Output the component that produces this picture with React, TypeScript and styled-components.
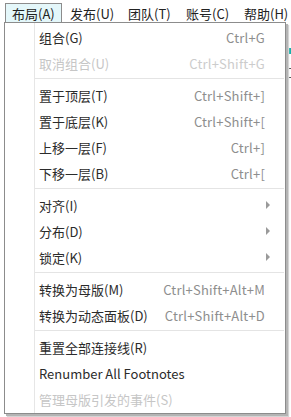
import styled, { createGlobalStyle } from "styled-components";

const GlobalStyle = createGlobalStyle`
  html, body {
    margin: 0;
    padding: 0;
    background: #ffffff;
  }
  body {
    font-family: "Noto Sans CJK SC", "Noto Sans", sans-serif;
    font-size: 13px;
    color: #333333;
  }
`;

const Page = styled.div`
  position: relative;
  width: 291px;
  height: 417px;
  overflow: hidden;
  background: #ffffff;
`;

const MenuBar = styled.div`
  display: flex;
  align-items: flex-end;
  height: 22px;
  padding-left: 5px;
  gap: 1px;
  background: #ffffff;
`;

const MenuTab = styled.div<{ $active?: boolean }>`
  flex: none;
  width: 57px;
  box-sizing: border-box;
  height: 19px;
  line-height: 19px;
  padding: 0 0 0 6px;
  border: 1px solid ${(p) => (p.$active ? "#8c8c8c" : "transparent")};
  border-bottom: none;
  background: ${(p) => (p.$active ? "#e4f7fa" : "transparent")};
  color: #222222;
  white-space: nowrap;
`;

const Canvas = styled.div`
  position: relative;
  height: 395px;
`;

const CanvasBlock = styled.div`
  position: absolute;
  left: 287px;
  top: 26px;
  width: 12px;
  height: 6px;
  background: #17b2ac;
`;

const CanvasTick = styled.div`
  position: absolute;
  left: 287px;
  top: 46px;
  width: 6px;
  height: 8px;
  border-top: 1px solid #555;
  border-bottom: 1px solid #555;
`;

const Dropdown = styled.div`
  position: absolute;
  left: 4px;
  top: 22px;
  width: 280px;
  padding: 1px 0 1px;
  border: 1px solid #8c8c8c;
  background: linear-gradient(
    to right,
    #ffffff 29px,
    #e6e6e6 29px,
    #e6e6e6 30px,
    #ffffff 30px
  );
  box-shadow: 2px 2px 0 #b4b4b4, 3px 3px 1px #d4d4d4;
`;

const Item = styled.div<{ $disabled?: boolean }>`
  display: flex;
  align-items: center;
  height: 26px;
  padding: 0 20px 0 34px;
  color: ${(p) => (p.$disabled ? "#c6c6c6" : "#2b2b2b")};
  white-space: nowrap;
`;

const Label = styled.span`
  flex: 1;
`;

const Shortcut = styled.span<{ $disabled?: boolean }>`
  color: ${(p) => (p.$disabled ? "#cccccc" : "#8e8e8e")};
  letter-spacing: 0.2px;
`;

const Arrow = styled.span`
  width: 0;
  height: 0;
  margin-right: -5px;
  border-top: 4px solid transparent;
  border-bottom: 4px solid transparent;
  border-left: 4px solid #9a9a9a;
`;

const Separator = styled.div`
  height: 1px;
  margin: 2px 1px 3px 30px;
  background: #e4e4e4;
`;

type Entry =
  | { sep: true }
  | { sep?: false; label: string; shortcut?: string; disabled?: boolean; sub?: boolean };

const entries: Entry[] = [
  { label: "组合(G)", shortcut: "Ctrl+G" },
  { label: "取消组合(U)", shortcut: "Ctrl+Shift+G", disabled: true },
  { sep: true },
  { label: "置于顶层(T)", shortcut: "Ctrl+Shift+]" },
  { label: "置于底层(K)", shortcut: "Ctrl+Shift+[" },
  { label: "上移一层(F)", shortcut: "Ctrl+]" },
  { label: "下移一层(B)", shortcut: "Ctrl+[" },
  { sep: true },
  { label: "对齐(I)", sub: true },
  { label: "分布(D)", sub: true },
  { label: "锁定(K)", sub: true },
  { sep: true },
  { label: "转换为母版(M)", shortcut: "Ctrl+Shift+Alt+M" },
  { label: "转换为动态面板(D)", shortcut: "Ctrl+Shift+Alt+D" },
  { sep: true },
  { label: "重置全部连接线(R)" },
  { label: "Renumber All Footnotes" },
  { label: "管理母版引发的事件(S)", disabled: true },
];

const tabs = ["布局(A)", "发布(U)", "团队(T)", "账号(C)", "帮助(H)"];

export default function App() {
  return (
    <Page>
      <GlobalStyle />
      <MenuBar>
        {tabs.map((t, i) => (
          <MenuTab key={t} $active={i === 0}>
            {t}
          </MenuTab>
        ))}
      </MenuBar>
      <Canvas>
        <CanvasBlock />
        <CanvasTick />
      </Canvas>
      <Dropdown>
        {entries.map((e, i) =>
          e.sep ? (
            <Separator key={i} />
          ) : (
            <Item key={i} $disabled={e.disabled}>
              <Label>{e.label}</Label>
              {e.shortcut && <Shortcut $disabled={e.disabled}>{e.shortcut}</Shortcut>}
              {e.sub && <Arrow />}
            </Item>
          )
        )}
      </Dropdown>
    </Page>
  );
}
